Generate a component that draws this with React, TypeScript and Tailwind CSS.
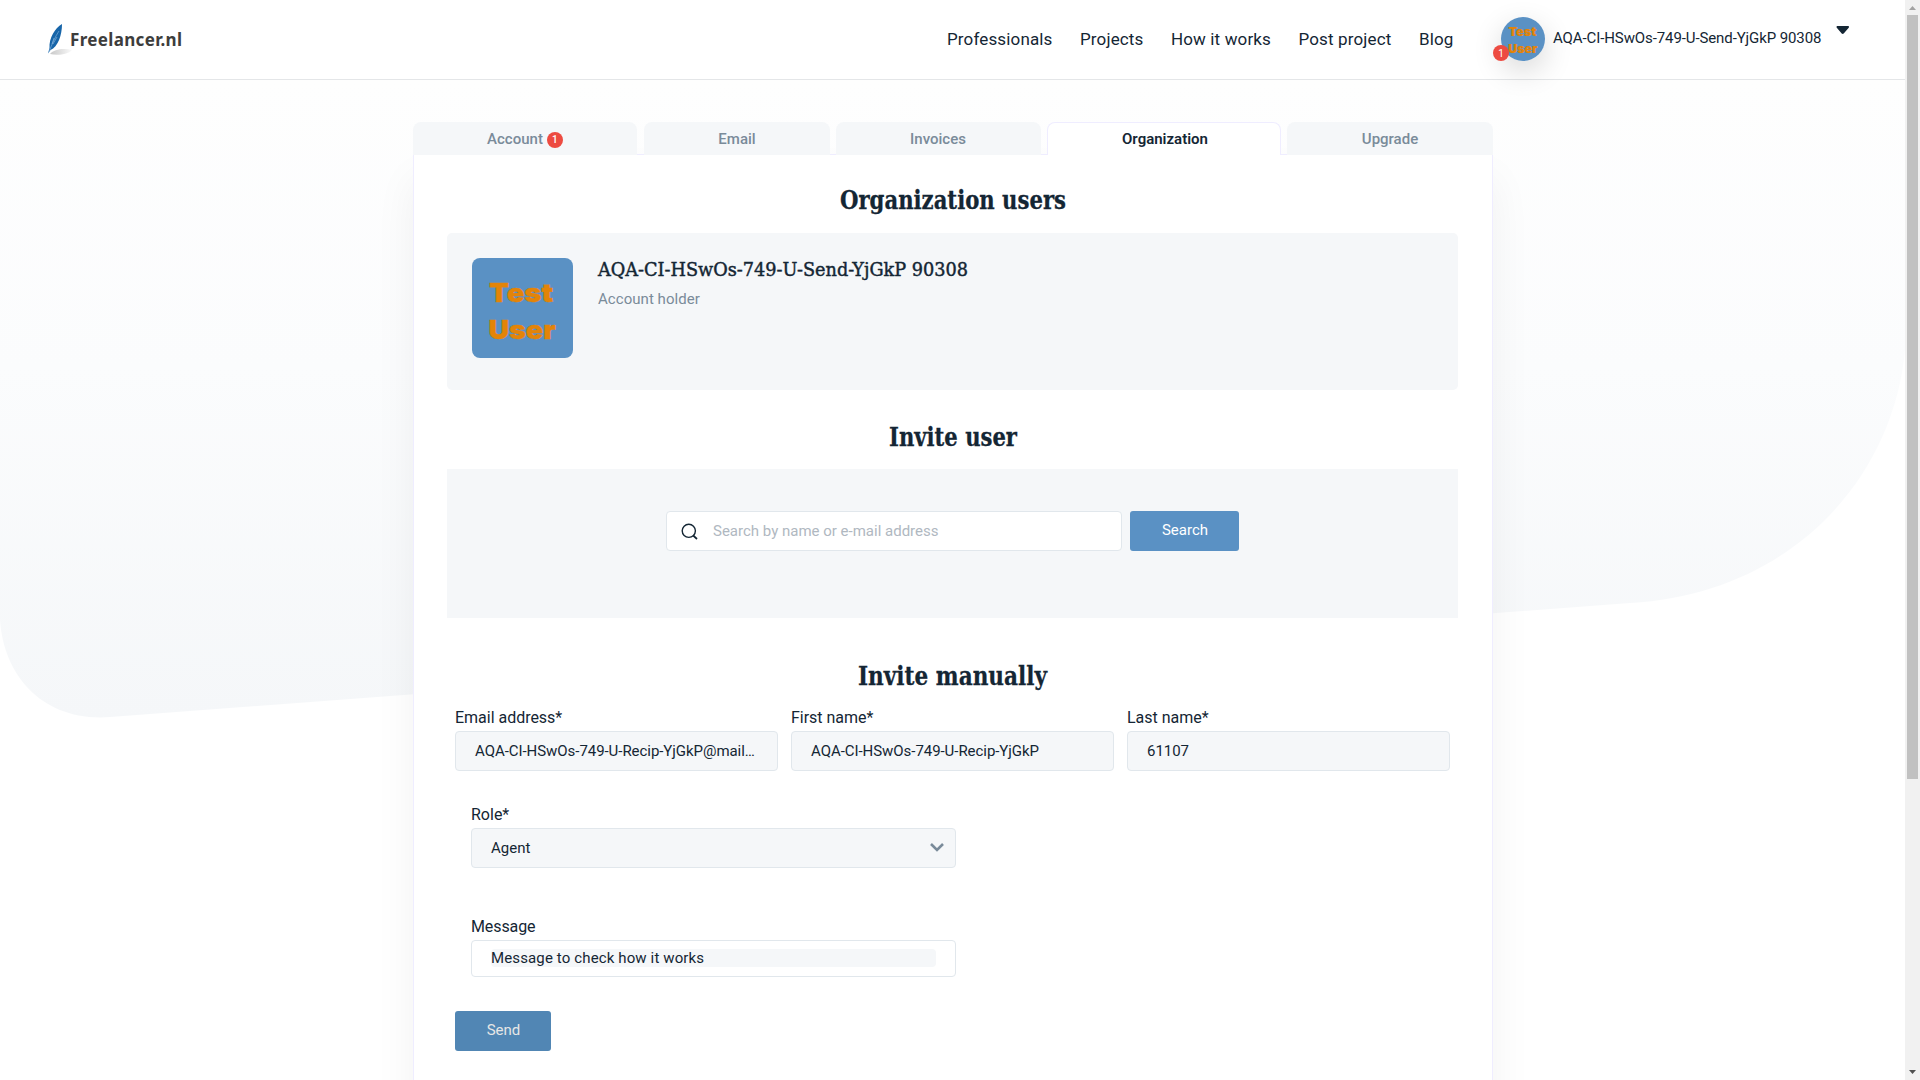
import React from "react";

function Avatar({ small }: { small?: boolean }) {
  return (
    <svg viewBox="0 0 101 100" preserveAspectRatio="none" className={small ? "size-11 rounded-full shadow-[0_10px_30px_rgba(0,0,0,0.16)]" : "h-[100px] w-[101px] rounded-lg"}>
      <rect width="101" height="100" fill="#5a91c4" />
      <g fill="#e38408" stroke="#e38408" strokeWidth="0.4" fontFamily="Inter" fontWeight="900" fontSize="26">
        <text x="17" y="44" textLength="64" lengthAdjust="spacingAndGlyphs">Test</text>
        <text x="16.5" y="81" textLength="67" lengthAdjust="spacingAndGlyphs">User</text>
      </g>
    </svg>
  );
}

function Heading({ children, width, className }: { children: string; width: number; className: string }) {
  return (
    <h2 className={"flex h-10 items-center justify-center " + className}>
      <svg width={width} height="40" className="overflow-visible">
        <text x="-1" y="29" fill="#142634" stroke="#142634" strokeWidth="0.3" fontSize="25.5" textLength={width + 1} lengthAdjust="spacingAndGlyphs" className="font-['Roboto_Slab','DejaVu_Serif',serif] font-bold">{children}</text>
      </svg>
    </h2>
  );
}

function Field({ label, value }: { label: string; value: string }) {
  return (
    <label className="flex w-[323px] flex-col">
      <span className="h-[26px] text-base leading-[26px] tracking-[-0.02px]">{label}</span>
      <span className="flex h-10 items-center whitespace-nowrap rounded border border-[#e1e7ec] bg-[#f5f7f9] px-[19px] text-[15px] tracking-[-0.05px]">{value}</span>
    </label>
  );
}

function Tab({ label, className, badge }: { label: string; className: string; badge?: boolean }) {
  return (
    <div className={"flex items-center justify-center gap-1 rounded-t-lg text-[15px] " + className}>
      {label}
      {badge && <span className="flex size-4 items-center justify-center rounded-full bg-[#ed4b41] text-[10px] text-white">1</span>}
    </div>
  );
}

export default function App() {
  return (
    <div className="relative flex h-[1080px] w-[1920px] overflow-hidden bg-white font-['Roboto',sans-serif] text-[#142634]">
      <svg className="absolute left-0 top-0" width="1905" height="730">
        <defs>
          <linearGradient id="bg" x1="0" y1="80" x2="0" y2="718" gradientUnits="userSpaceOnUse">
            <stop offset="0" stopColor="#fefefe" />
            <stop offset="0.45" stopColor="#fbfcfd" />
            <stop offset="1" stopColor="#f5f7f9" />
          </linearGradient>
        </defs>
        <path d="M0 80V620C4 678 45 722 110 717L1630 603C1790 594 1893 480 1905 350V80Z" fill="url(#bg)" />
      </svg>
      <div className="relative flex w-[1905px] flex-col">
        <header className="flex h-20 shrink-0 border-b border-[#e4e6e8] bg-white">
          <div className="flex w-[947px] pl-12 pt-6">
            <svg width="24" height="32" viewBox="0 0 24 32">
              <defs>
                <linearGradient id="sh"><stop stopColor="#c8c8c8" /><stop offset="1" stopColor="#fafafa" /></linearGradient>
              </defs>
              <path d="M2 30C6 25 16 24 24 26C21 30 10 32 2 30Z" fill="url(#sh)" />
              <path d="M14 0C7 4 1 14 1.500 24L0 29.500L2.500 26C10 23 14 11 14 0Z" fill="#1765a9" />
              <path d="M1 28C4 20 7 13 11 7M4 20L6 14M5 20L9 13" stroke="#8fbbe0" strokeWidth=".6" fill="none" />
            </svg>
            <svg width="114" height="32" className="-ml-0.5 overflow-visible">
              <text x="0" y="21.500" textLength="112" fill="#3d3d3c" fontFamily="Noto Sans" fontWeight="700" fontSize="17">Freelancer.nl</text>
            </svg>
          </div>
          <nav className="flex w-[554px] items-center gap-[27.5px] text-[17px] tracking-[0.14px]">
            {["Professionals", "Projects", "How it works", "Post project", "Blog"].map((t) => <a key={t} className="whitespace-nowrap">{t}</a>)}
          </nav>
          <div className="flex pt-[17px]">
            <div className="relative size-11">
              <Avatar small />
              <span className="absolute -left-2 bottom-0 flex size-4 items-center justify-center rounded-full bg-[#ed4b41] text-[10px] text-white">1</span>
            </div>
            <span className="ml-2 mt-[9px] w-[274px] whitespace-nowrap text-[15px] leading-6 tracking-[-0.1px]">AQA-CI-HSwOs-749-U-Send-YjGkP 90308</span>
            <svg className="ml-[9px] mt-[9px]" width="14" height="8"><path d="M1 0H12.500Q13.500 1 12.500 2L7.700 7.500Q6.700 8.400 5.700 7.500L1 2Q0 1 1 0Z" fill="#142634" /></svg>
          </div>
        </header>

        <main className="ml-[413px] mt-[42px] flex h-[958px] w-[1080px] flex-col">
          <div className="z-10 -mb-px flex h-[33px] shrink-0 font-medium text-[#7a8b9a]">
            <Tab label="Account" badge className="w-[224px] bg-[#f5f7f9] pt-0.5" />
            <Tab label="Email" className="ml-[7px] w-[186px] bg-[#f5f7f9] pt-0.5" />
            <Tab label="Invoices" className="ml-1.5 w-[205px] bg-[#f5f7f9] pr-px pt-0.5" />
            <Tab label="Organization" className="ml-1.5 w-[234px] border border-b-0 border-[#efedff] bg-white pl-0.5 font-semibold text-[#142634]" />
            <Tab label="Upgrade" className="ml-1.5 w-[206px] bg-[#f5f7f9] pt-0.5" />
          </div>
          <section className="flex h-[1000px] shrink-0 flex-col border border-[#efedff] bg-white shadow-[0_25px_40px_rgba(0,0,0,0.055)]">
            <Heading width={225} className="mt-[25px]">Organization users</Heading>
            <div className="ml-[33px] mt-[13px] flex h-[157px] w-[1011px] rounded-[5px] bg-[#f5f7f9] p-[25px]">
              <Avatar />
              <div className="ml-[25px]">
                <svg width="369" height="24" className="block overflow-visible">
                  <text x="0" y="18" fill="#142634" stroke="#142634" strokeWidth="0.45" fontSize="18.5" textLength="370" lengthAdjust="spacingAndGlyphs" className="font-['Roboto_Slab','DejaVu_Serif',serif] font-medium">AQA-CI-HSwOs-749-U-Send-YjGkP 90308</text>
                </svg>
                <p className="mt-1.5 text-[15px] leading-[22px] tracking-[0.05px] text-[#7a8b9a]">Account holder</p>
              </div>
            </div>
            <Heading width={127} className="mt-[27px]">Invite user</Heading>
            <div className="ml-[33px] mt-3 flex h-[149px] w-[1011px] justify-center gap-2 bg-[#f5f7f9] pt-[42px]">
              <div className="flex h-10 w-[456px] items-center rounded border border-[#e1e7ec] bg-white pl-3.5">
                <svg width="17" height="17" fill="none" stroke="#142634" strokeWidth="1.4"><circle cx="7.800" cy="7.800" r="6.600" /><path d="M12.200 12.500L16 16" strokeWidth="1.700" /></svg>
                <span className="ml-[15px] text-[15px] text-[#b0b8c1]">Search by name or e-mail address</span>
              </div>
              <button className="h-10 w-[109px] rounded-[3px] bg-[#5a91c4] pb-0.5 pl-px text-[15px] text-white">Search</button>
            </div>
            <Heading width={188} className="mt-[38px]">Invite manually</Heading>
            <div className="ml-[41px] mt-[9px] flex gap-[13px]">
              <Field label="Email address*" value="AQA-CI-HSwOs-749-U-Recip-YjGkP@mail…" />
              <Field label="First name*" value="AQA-CI-HSwOs-749-U-Recip-YjGkP" />
              <Field label="Last name*" value="61107" />
            </div>
            <div className="ml-[57px] mt-[31px] w-[485px]">
              <div className="h-[26px] leading-[26px]">Role*</div>
              <div className="flex h-10 items-center justify-between rounded border border-[#e1e7ec] bg-[#f5f7f9] pl-[19px] pr-[11px] text-[15px]">
                Agent
                <svg className="-mt-px" width="14" height="9" fill="none" stroke="#7a8b9a" strokeWidth="2.6"><path d="M1 1L7 7L13 1" /></svg>
              </div>
            </div>
            <div className="ml-[57px] mt-[46px] w-[485px]">
              <div className="h-[26px] leading-[26px] tracking-[-0.1px]">Message</div>
              <div className="h-[37px] rounded border border-[#e1e7ec] bg-white px-[19px] pt-2">
                <div className="h-[18px] rounded bg-[#f5f7f9] text-[15px] leading-[18px] tracking-[0.13px]">Message to check how it works</div>
              </div>
            </div>
            <button className="ml-[41px] mt-[34px] h-10 w-24 rounded-[3px] bg-[#5186b4] pb-0.5 pl-px text-[15px] text-[#e6e6e6]">Send</button>
          </section>
        </main>
      </div>
      <aside className="relative flex w-[15px] flex-col items-center bg-[#f1f1f1]">
        <svg width="15" height="15"><path d="M4 10L7.500 6L11 10Z" fill="#a3a3a3" /></svg>
        <div className="h-[764px] w-[11px] bg-[#c1c1c1]" />
        <svg className="mt-auto" width="15" height="15"><path d="M4 5L7.500 9L11 5Z" fill="#505050" /></svg>
      </aside>
    </div>
  );
}
